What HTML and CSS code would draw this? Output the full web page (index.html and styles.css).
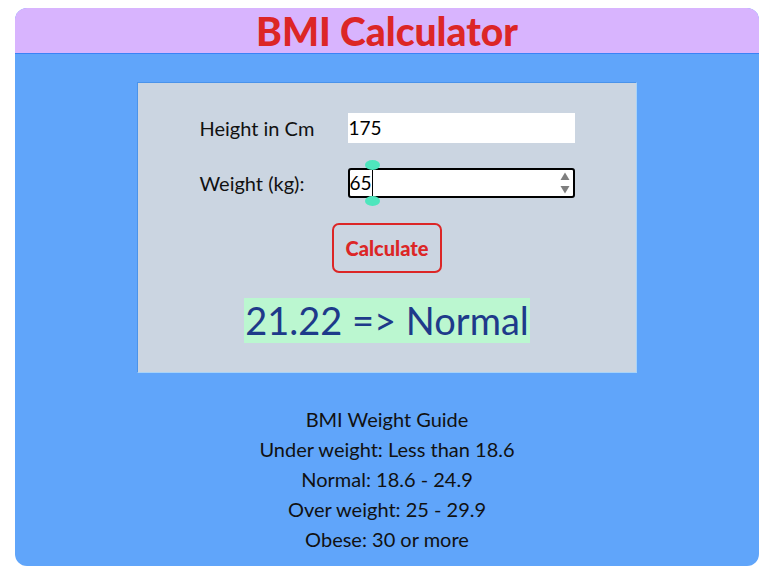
FILE: index.html
```html
<!DOCTYPE html>
<html lang="en">
<head>
<meta charset="utf-8">
<title>BMI Calculator</title>
<link rel="stylesheet" href="styles.css">
</head>
<body>
<div class="app">
  <header class="top">
    <h1 class="title">BMI Calculator</h1>
  </header>
  <main class="content">
    <section class="card">
      <div class="row">
        <span class="label">Height in Cm</span>
        <div class="field">175</div>
      </div>
      <div class="row">
        <span class="label">Weight (kg):</span>
        <div class="field focused">
          <span class="value">65</span>
          <span class="caret"><span class="handle handle-top"></span><span class="handle handle-bottom"></span></span>
          <span class="spin">
            <svg width="10" height="24" viewBox="0 0 10 24"><path d="M5 1.5 L9.5 9 L0.5 9 Z" fill="#7f7f7f"/><path d="M0.5 15 L9.5 15 L5 22.5 Z" fill="#7f7f7f"/></svg>
          </span>
        </div>
      </div>
      <button class="calc" type="button">Calculate</button>
      <div class="result">21.22 =&gt; Normal</div>
    </section>
    <section class="guide">
      <p>BMI Weight Guide</p>
      <p>Under weight: Less than 18.6</p>
      <p>Normal: 18.6 - 24.9</p>
      <p>Over weight: 25 - 29.9</p>
      <p>Obese: 30 or more</p>
    </section>
  </main>
</div>
</body>
</html>
```
FILE: styles.css
```css
html, body {
  margin: 0;
  padding: 0;
  background: #ffffff;
}
body {
  padding: 8px 13px 0 15px;
  font-family: "Lato", "Open Sans", sans-serif;
  color: #111827;
}
.app {
  border-radius: 12px;
  overflow: hidden;
  background: #60a5fa;
  height: 558px;
  display: flex;
  flex-direction: column;
}
.top {
  background: #d8b4fe;
  height: 45px;
  border-bottom: 1px solid #3b82f6;
  display: flex;
  align-items: center;
  justify-content: center;
}
.title {
  margin: 0;
  font-size: 39px;
  font-weight: 900;
  color: #dc2626;
  line-height: 1;
  position: relative;
  top: 1px;
}
.content {
  display: flex;
  flex-direction: column;
  align-items: center;
  padding-top: 28px;
}
.card {
  width: 498px;
  background: #cbd5e1;
  border: 1px solid #4a93ea;
  border-right-color: #a9d3f7;
  border-bottom-color: #a9d3f7;
  padding: 30px 0 29px;
  display: flex;
  flex-direction: column;
  align-items: center;
}
.row {
  display: flex;
  align-items: center;
  width: 375px;
  margin-bottom: 25px;
}
.label {
  width: 148px;
  font-size: 20px;
  color: #111;
}
.field {
  position: relative;
  width: 227px;
  height: 30px;
  box-sizing: border-box;
  background: #fff;
  font-size: 19px;
  line-height: 30px;
  padding-left: 1px;
  color: #000;
  display: flex;
  align-items: center;
}
.field.focused {
  border: 2px solid #000;
  border-radius: 3px;
  padding-left: 0;
}
.value {
  line-height: 26px;
}
.caret {
  position: relative;
  width: 1px;
  height: 26px;
  background: #000;
  margin-left: 0;
}
.handle {
  position: absolute;
  left: -7px;
  width: 15px;
  height: 10px;
  border-radius: 50%;
  background: #4ee6bd;
}
.handle-top {
  top: -10px;
}
.handle-bottom {
  bottom: -10px;
}
.spin {
  margin-left: auto;
  margin-right: 3px;
  display: flex;
  align-items: center;
}
.calc {
  margin-top: 0;
  width: 110px;
  height: 50px;
  background: transparent;
  border: 2px solid #dc2626;
  border-radius: 7px;
  color: #dc2626;
  font-family: inherit;
  font-size: 20px;
  font-weight: 900;
  padding: 0;
  cursor: pointer;
}
.result {
  margin-top: 25px;
  background: #bbf7d0;
  color: #1e3a8a;
  font-size: 38px;
  line-height: 45px;
  padding: 0 1px;
}
.guide {
  margin-top: 31px;
  text-align: center;
}
.guide p {
  margin: 0;
  font-size: 20px;
  line-height: 30px;
  color: #111;
}
```
